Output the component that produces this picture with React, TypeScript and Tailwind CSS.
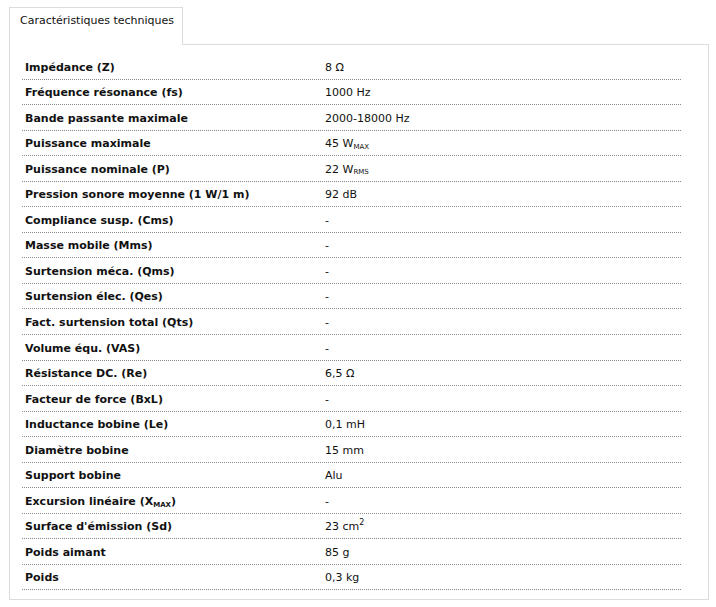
const rows: [React.ReactNode, React.ReactNode][] = [
  ["Impédance (Z)", "8 Ω"],
  ["Fréquence résonance (fs)", "1000 Hz"],
  ["Bande passante maximale", "2000-18000 Hz"],
  ["Puissance maximale", <>45 W<sub className="text-[7px] align-baseline">MAX</sub></>],
  ["Puissance nominale (P)", <>22 W<sub className="text-[7px] align-baseline">RMS</sub></>],
  ["Pression sonore moyenne (1 W/1 m)", "92 dB"],
  ["Compliance susp. (Cms)", "-"],
  ["Masse mobile (Mms)", "-"],
  ["Surtension méca. (Qms)", "-"],
  ["Surtension élec. (Qes)", "-"],
  ["Fact. surtension total (Qts)", "-"],
  ["Volume équ. (VAS)", "-"],
  ["Résistance DC. (Re)", "6,5 Ω"],
  ["Facteur de force (BxL)", "-"],
  ["Inductance bobine (Le)", "0,1 mH"],
  ["Diamètre bobine", "15 mm"],
  ["Support bobine", "Alu"],
  [<>Excursion linéaire (X<sub className="text-[7px] align-baseline">MAX</sub>)</>, "-"],
  ["Surface d'émission (Sd)", <>23 cm<sup className="text-[8px] align-baseline relative -top-[5px]">2</sup></>],
  ["Poids aimant", "85 g"],
  ["Poids", "0,3 kg"],
]

export default function App() {
  return (
    <div className="w-[716px] h-[607px] bg-white pt-[7px] pl-[9px] font-['DejaVu_Sans',sans-serif] text-[11px] text-[#111]">
      {/* Tabs */}
      <div className="flex w-[700px]">
        <div className="w-[174px] h-[38px] border border-b-0 border-[#dcdcdc] px-[10px] pt-[5px] leading-[16px] whitespace-nowrap">
          Caractéristiques techniques
        </div>
        <div className="flex-1 h-[38px] border-b border-[#dcdcdc]" />
      </div>

      {/* Panel */}
      <div className="w-[700px] h-[555px] border border-t-0 border-[#dcdcdc] pl-[12px] pt-[9px]">
        <div className="w-[659px]">
          {rows.map(([label, value], i) => (
            <div key={i} className="flex items-center h-[25.55px] border-b border-dotted border-[#8a8a8a] pt-[3px]">
              <div className="w-[303px] pl-[3px] font-bold">{label}</div>
              <div className="flex-1">{value}</div>
            </div>
          ))}
        </div>
      </div>
    </div>
  )
}
